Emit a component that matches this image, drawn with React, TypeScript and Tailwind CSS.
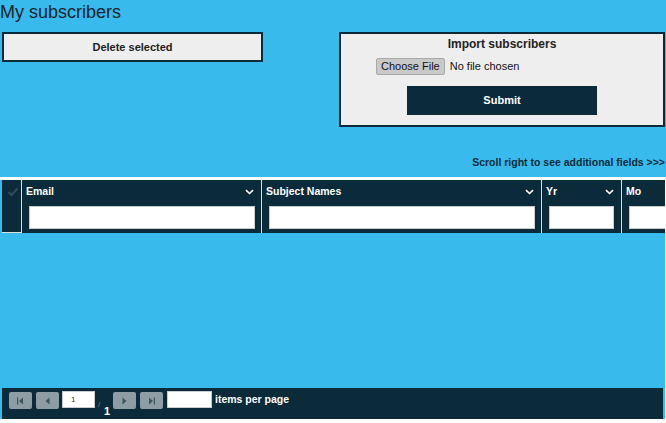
import React from "react";

const dark = "bg-[#0b2b3a]";

function Chevron() {
  return (
    <svg width="9" height="6" viewBox="0 0 9 6" className="shrink-0">
      <path d="M1 1.2 L4.5 4.5 L8 1.2" fill="none" stroke="#ffffff" strokeWidth="1.6" />
    </svg>
  );
}

function HeaderCell({
  label,
  width,
  inputWidth,
  chevron = true,
}: {
  label: string;
  width: string;
  inputWidth: string;
  chevron?: boolean;
}) {
  return (
    <div className={`${width} shrink-0 border-r border-[#d9dee0] flex flex-col`}>
      <div className="flex h-[22px] items-center justify-between pl-[4px] pr-[7px] pt-[1px]">
        <span className="text-[10.5px] font-bold text-white">{label}</span>
        {chevron && <Chevron />}
      </div>
      <div className="pl-[7px] pt-[4px]">
        <div className={`${inputWidth} h-[23px] border border-[#c9cccf] bg-white`} />
      </div>
    </div>
  );
}

function PagerButton({ kind }: { kind: "first" | "prev" | "next" | "last" }) {
  return (
    <div className="flex h-[17px] w-[23px] items-center justify-center rounded-[2px] bg-[#8d9da3]">
      <svg width="9" height="8" viewBox="0 0 9 8">
        {kind === "first" && (
          <>
            <rect x="1" y="0.5" width="1.2" height="7" fill="#3c5561" />
            <path d="M7 0.5 L3 4 L7 7.5 Z" fill="#3c5561" />
          </>
        )}
        {kind === "prev" && <path d="M6.5 0.5 L2.5 4 L6.5 7.5 Z" fill="#3c5561" />}
        {kind === "next" && <path d="M2.5 0.5 L6.5 4 L2.5 7.5 Z" fill="#3c5561" />}
        {kind === "last" && (
          <>
            <path d="M2 0.5 L6 4 L2 7.5 Z" fill="#3c5561" />
            <rect x="6.8" y="0.5" width="1.2" height="7" fill="#3c5561" />
          </>
        )}
      </svg>
    </div>
  );
}

export default function App() {
  return (
    <div
      className="relative h-[423px] w-[666px] overflow-hidden bg-[#39baec] text-[#0b2b3a]"
      style={{ fontFamily: '"Liberation Sans", Arial, sans-serif' }}
    >
      <h1 className="h-[24px] text-[18px] leading-[24px] text-[#14232b]">My subscribers</h1>

      <div className="mt-[8px] flex items-start">
        <button
          type="button"
          className="ml-[2px] h-[30px] w-[261px] border-2 border-[#0b2b3a] bg-[#eeeeee] text-[11px] font-bold text-[#222]"
        >
          Delete selected
        </button>

        <div className="ml-[76px] flex h-[95px] w-[326px] flex-col items-center border-2 border-[#0b2b3a] bg-[#eeeeee]">
          <div className="mt-[3px] text-[12px] font-bold leading-[15px] text-[#222]">Import subscribers</div>
          <div className="mt-[6px] flex w-full items-center pl-[35px]">
            <div className="flex h-[17px] items-center rounded-[2px] border border-[#a9a9a9] bg-[#c9c9c9] px-[4px] text-[11px] text-[#111]">
              Choose File
            </div>
            <span className="ml-[5px] text-[11px] text-[#111]">No file chosen</span>
          </div>
          <button
            type="button"
            className={`mt-[11px] h-[29px] w-[190px] ${dark} text-[11px] font-bold text-white`}
          >
            Submit
          </button>
        </div>
      </div>

      <div className="mt-[26px] h-[18px] pr-[1px] text-right text-[10.5px] font-bold leading-[18px]">
        Scroll right to see additional fields &gt;&gt;&gt;
      </div>

      <div className="mt-[6px] h-[3px] bg-white" />

      <div className={`ml-[2px] flex h-[53px] ${dark}`}>
        <div className="flex w-[20px] shrink-0 flex-col border-r border-[#d9dee0] border-b">
          <svg width="12" height="10" viewBox="0 0 12 10" className="ml-[5px] mt-[7px]">
            <path d="M1.5 5 L4.5 8 L10.5 1.5" fill="none" stroke="#2e4955" strokeWidth="2.4" />
          </svg>
        </div>
        <HeaderCell label="Email" width="w-[240px]" inputWidth="w-[226px]" />
        <HeaderCell label="Subject Names" width="w-[280px]" inputWidth="w-[266px]" />
        <HeaderCell label="Yr" width="w-[80px]" inputWidth="w-[65px]" />
        <HeaderCell label="Mo" width="w-[60px]" inputWidth="w-[60px]" chevron={false} />
      </div>

      <div className="h-[155px]" />

      <div className={`ml-[2px] flex h-[31px] w-[661px] items-start ${dark} pl-[7px] pt-[3px]`}>
        <div className="mt-[1px] flex gap-[4px]">
          <PagerButton kind="first" />
          <PagerButton kind="prev" />
        </div>
        <div className="ml-[3px] flex h-[17px] w-[33px] items-center border border-[#c9cccf] bg-white pl-[8px] text-[8px] text-[#333]">
          1
        </div>
        <div className="relative ml-[3px] h-[26px] w-[15px]">
          <span className="absolute left-[0px] top-[8px] text-[8px] text-[#6b7f88]">/</span>
          <span className="absolute left-[6px] top-[12px] text-[11px] font-bold text-white">1</span>
        </div>
        <div className="mt-[1px] flex gap-[4px]">
          <PagerButton kind="next" />
          <PagerButton kind="last" />
        </div>
        <div className="ml-[4px] h-[17px] w-[45px] border border-[#c9cccf] bg-white" />
        <span className="ml-[3px] text-[10.5px] font-bold leading-[17px] text-white">items per page</span>
      </div>
      <div className="absolute bottom-0 left-0 h-[4px] w-full bg-white" />
      <div className="absolute right-0 top-[177px] h-[246px] w-[1px] bg-white" />
    </div>
  );
}
